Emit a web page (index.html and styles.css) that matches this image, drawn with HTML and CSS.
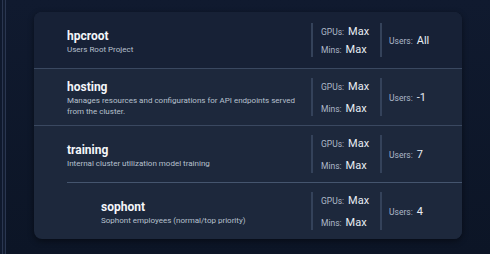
FILE: index.html
```html
<!DOCTYPE html>
<html>
<head>
<meta charset="utf-8">
<link rel="stylesheet" href="styles.css">
</head>
<body>
<div class="edge"></div>
<main class="main">
  <div class="card">
    <div class="row first">
      <div class="info">
        <div class="title">hpcroot</div>
        <div class="desc">Users Root Project</div>
      </div>
      <div class="stats">
        <div class="stat"><span class="lbl">GPUs:</span> <span class="val">Max</span></div>
        <div class="stat"><span class="lbl">Mins:</span> <span class="val">Max</span></div>
      </div>
      <div class="users"><div class="stat"><span class="lbl">Users:</span> <span class="val">All</span></div></div>
    </div>
    <div class="row">
      <div class="info">
        <div class="title">hosting</div>
        <div class="desc">Manages resources and configurations for API endpoints served from the cluster.</div>
      </div>
      <div class="stats">
        <div class="stat"><span class="lbl">GPUs:</span> <span class="val">Max</span></div>
        <div class="stat"><span class="lbl">Mins:</span> <span class="val">Max</span></div>
      </div>
      <div class="users"><div class="stat"><span class="lbl">Users:</span> <span class="val">-1</span></div></div>
    </div>
    <div class="group">
      <div class="row">
        <div class="info">
          <div class="title">training</div>
          <div class="desc">Internal cluster utilization model training</div>
        </div>
        <div class="stats">
          <div class="stat"><span class="lbl">GPUs:</span> <span class="val">Max</span></div>
          <div class="stat"><span class="lbl">Mins:</span> <span class="val">Max</span></div>
        </div>
        <div class="users"><div class="stat"><span class="lbl">Users:</span> <span class="val">7</span></div></div>
      </div>
      <div class="children">
        <div class="row child">
          <div class="info">
            <div class="title">sophont</div>
            <div class="desc">Sophont employees (normal/top priority)</div>
          </div>
          <div class="stats">
            <div class="stat"><span class="lbl">GPUs:</span> <span class="val">Max</span></div>
            <div class="stat"><span class="lbl">Mins:</span> <span class="val">Max</span></div>
          </div>
          <div class="users"><div class="stat"><span class="lbl">Users:</span> <span class="val">4</span></div></div>
        </div>
      </div>
    </div>
  </div>
</main>
</body>
</html>
```
FILE: styles.css
```css
html, body {
  margin: 0;
  padding: 0;
  height: 100%;
}
body {
  display: flex;
  background: #0f192d;
  font-family: Roboto, "Noto Sans", sans-serif;
  color: #e2e8f0;
}
.edge {
  width: 2px;
  margin-left: 2px;
  border-left: 1px solid #2a3650;
  border-right: 1px solid #2a3650;
  background: #121c30;
  flex: none;
}
.main {
  flex: 1;
  padding: 12px 0 0 28px;
  background: linear-gradient(#101a2f, #0c1526);
}
.card {
  width: 428px;
  border-radius: 8px;
  overflow: hidden;
  background: #1d283c;
  box-shadow: 0 2px 6px rgba(0, 0, 0, 0.45);
}
.row {
  display: flex;
  align-items: center;
  height: 56px;
  border-top: 1px solid #3a4860;
  background: #1d283c;
}
.row.first {
  border-top: none;
  background: #172136;
}
.info {
  flex: 1;
  padding-left: 33px;
  padding-top: 3px;
  min-width: 0;
}
.title {
  font-size: 12px;
  font-weight: 700;
  color: #f4f6fa;
  line-height: 14px;
}
.desc {
  font-size: 8px;
  color: #b7c0ce;
  line-height: 11px;
  margin-top: 1px;
  padding-right: 6px;
}
.stats {
  height: 34px;
  border-left: 2px solid #34425a;
  padding-left: 8px;
  display: flex;
  flex-direction: column;
  justify-content: space-between;
  box-sizing: border-box;
  width: 69px;
}
.row:not(.first) .stats { height: 38px; }
.stat {
  line-height: 14px;
  white-space: nowrap;
}
.users {
  width: 82px;
  height: 34px;
  border-left: 2px solid #34425a;
  padding-left: 7px;
  box-sizing: border-box;
  display: flex;
  align-items: center;
}
.row:not(.first) .users { height: 38px; }
.lbl {
  font-size: 8.5px;
  color: #aeb8c8;
}
.val {
  font-size: 11px;
  color: #e8edf4;
}
.children {
  margin-left: 33px;
}
.children .row {
  height: 56px;
  border-top: 1px solid #45556e;
}
.row.child .info {
  padding-left: 34px;
}
```
